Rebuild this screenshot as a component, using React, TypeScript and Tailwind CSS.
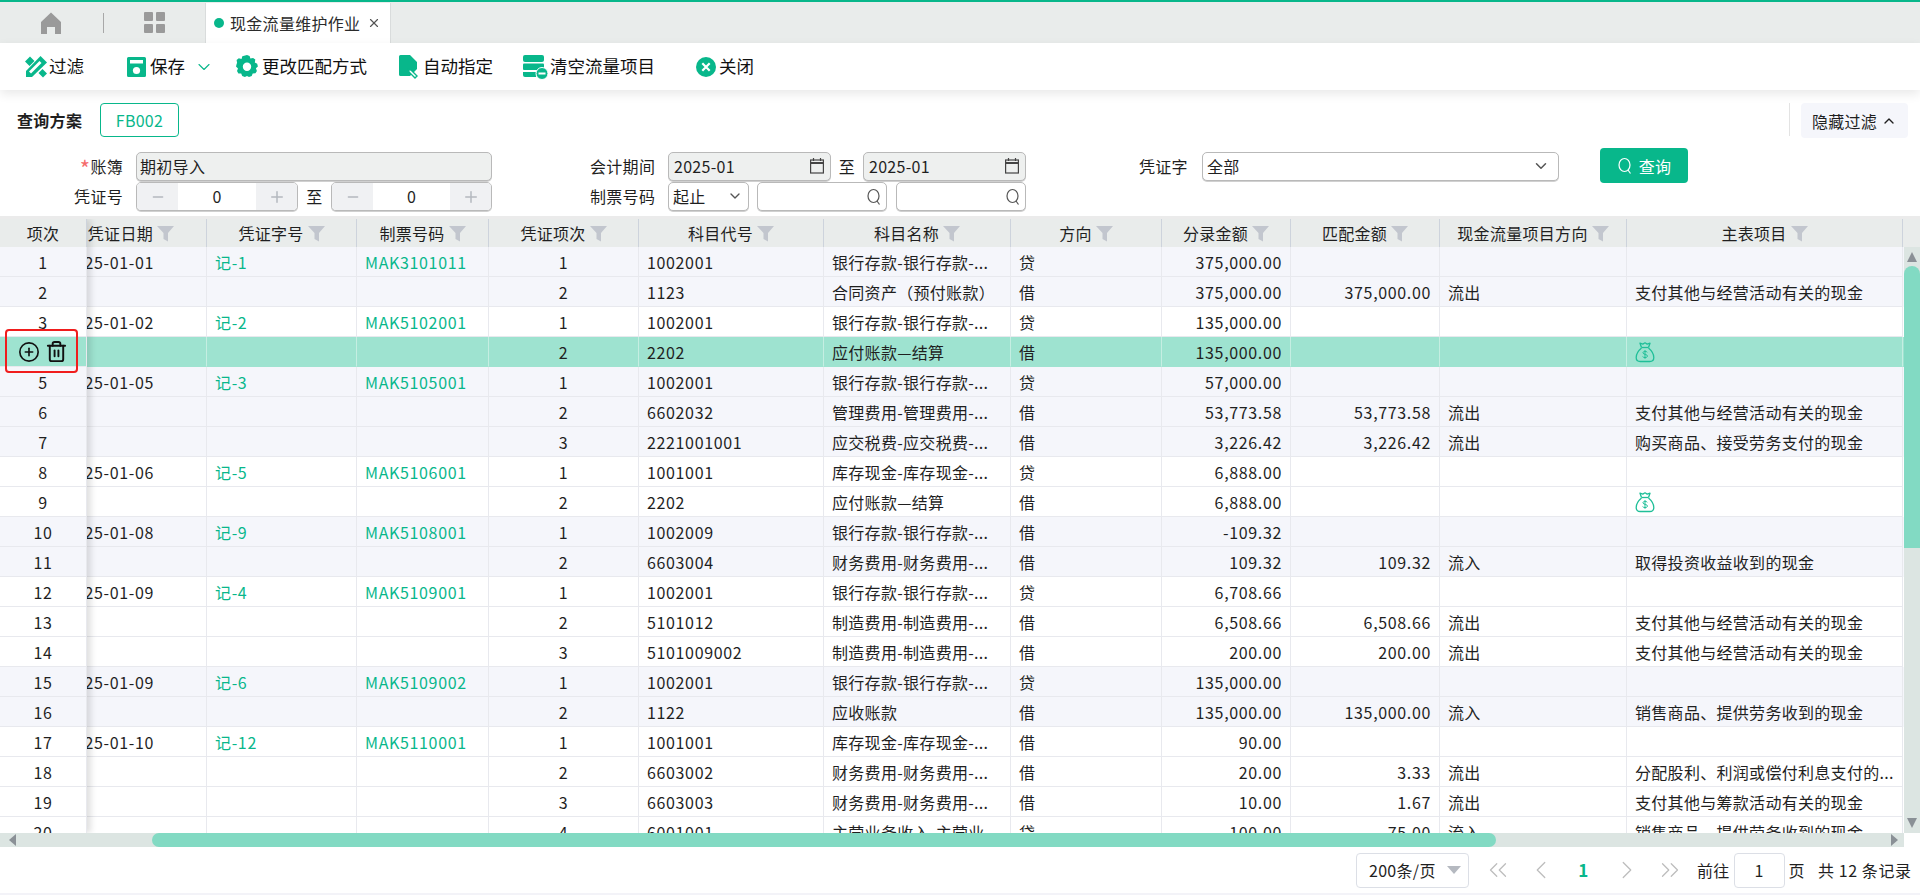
import React from "react";
import { ChevronDown, ChevronUp, ChevronLeft, ChevronRight, ChevronsLeft, ChevronsRight, Minus, Plus, X, CirclePlus, Trash2 } from "lucide-react";

const G = "#08b78b";
type Row = [string, string, string, string, string, string, string, string, string, string, string, string, number];
const YH = "银行存款-银行存款-...";
const ZF = "支付其他与经营活动有关的现金";
const XS = "销售商品、提供劳务收到的现金";
const rows: Row[] = [
  ["1", "2025-01-01", "记-1", "MAK3101011", "1", "1002001", YH, "贷", "375,000.00", "", "", "", 0],
  ["2", "", "", "", "2", "1123", "合同资产（预付账款）", "借", "375,000.00", "375,000.00", "流出", ZF, 0],
  ["3", "2025-01-02", "记-2", "MAK5102001", "1", "1002001", YH, "贷", "135,000.00", "", "", "", 1],
  ["4", "", "", "", "2", "2202", "应付账款—结算", "借", "135,000.00", "", "", "$", 2],
  ["5", "2025-01-05", "记-3", "MAK5105001", "1", "1002001", YH, "贷", "57,000.00", "", "", "", 0],
  ["6", "", "", "", "2", "6602032", "管理费用-管理费用-...", "借", "53,773.58", "53,773.58", "流出", ZF, 0],
  ["7", "", "", "", "3", "2221001001", "应交税费-应交税费-...", "借", "3,226.42", "3,226.42", "流出", "购买商品、接受劳务支付的现金", 0],
  ["8", "2025-01-06", "记-5", "MAK5106001", "1", "1001001", "库存现金-库存现金-...", "贷", "6,888.00", "", "", "", 1],
  ["9", "", "", "", "2", "2202", "应付账款—结算", "借", "6,888.00", "", "", "$", 1],
  ["10", "2025-01-08", "记-9", "MAK5108001", "1", "1002009", YH, "借", "-109.32", "", "", "", 0],
  ["11", "", "", "", "2", "6603004", "财务费用-财务费用-...", "借", "109.32", "109.32", "流入", "取得投资收益收到的现金", 0],
  ["12", "2025-01-09", "记-4", "MAK5109001", "1", "1002001", YH, "贷", "6,708.66", "", "", "", 1],
  ["13", "", "", "", "2", "5101012", "制造费用-制造费用-...", "借", "6,508.66", "6,508.66", "流出", ZF, 1],
  ["14", "", "", "", "3", "5101009002", "制造费用-制造费用-...", "借", "200.00", "200.00", "流出", ZF, 1],
  ["15", "2025-01-09", "记-6", "MAK5109002", "1", "1002001", YH, "贷", "135,000.00", "", "", "", 0],
  ["16", "", "", "", "2", "1122", "应收账款", "借", "135,000.00", "135,000.00", "流入", XS, 0],
  ["17", "2025-01-10", "记-12", "MAK5110001", "1", "1001001", "库存现金-库存现金-...", "借", "90.00", "", "", "", 1],
  ["18", "", "", "", "2", "6603002", "财务费用-财务费用-...", "借", "20.00", "3.33", "流出", "分配股利、利润或偿付利息支付的...", 1],
  ["19", "", "", "", "3", "6603003", "财务费用-财务费用-...", "借", "10.00", "1.67", "流出", "支付其他与筹款活动有关的现金", 1],
  ["20", "", "", "", "4", "6001001", "主营业务收入-主营业...", "贷", "100.00", "75.00", "流入", XS, 1],
];
const rowBg = (k: number) => (k === 2 ? "bg-[#9ee3d0]" : k === 1 ? "bg-white" : "bg-[#f5f6fb]");
const GRID = "grid grid-cols-[120px_150px_132px_150px_185px_187px_151px_129px_149px_187px_276px_1px]";

const Funnel = () => (
  <svg width="17" height="17" viewBox="0 0 17 17" className="ml-[4px] shrink-0"><path d="M0 1h17l-6 7v8.500L6.500 14V8z" fill="#c2c6ce" /></svg>
);
const Money = () => (
  <svg width="20" height="22" viewBox="0 0 20 22" fill="none" stroke="#1fbf98" strokeWidth="1.3" strokeLinejoin="round">
    <path d="M6.500 6.500 5 2.200l2.800.9L10 1.800l2.200 1.300 2.800-.9-1.500 4.300" />
    <path d="M6.500 6.500h7" />
    <path d="M6.500 7C3 10 1.200 13 1.200 16.500c0 2.600 1.600 4 4 4h9.600c2.400 0 4-1.400 4-4 0-3.500-1.800-6.500-5.300-9.500" />
    <path d="M12.300 11.300c-.6-.8-1.400-1-2.300-1-1.200 0-2 .6-2 1.500 0 2.100 4.400 1 4.400 3.200 0 1-.9 1.600-2.400 1.600-1 0-1.900-.4-2.400-1.100M10 9.200v8.600" strokeWidth="1" />
  </svg>
);
const Cal = () => (
  <svg width="16" height="18" viewBox="0 0 16 18" fill="none" stroke="#444" strokeWidth="1.200" className="shrink-0">
    <rect x="1.600" y="3" width="12.800" height="13" />
    <path d="M1.600 6h12.800" strokeWidth="2" />
    <path d="M4.500 1v3M11.500 1v3" />
  </svg>
);
const Lens = ({ c = "#555", s = 16 }: { c?: string; s?: number }) => (
  <svg width={s} height={s + 2} viewBox="0 0 16 18" fill="none" stroke={c} strokeWidth="1.200" className="shrink-0">
    <ellipse cx="7.500" cy="8" rx="5.500" ry="6.500" />
    <path d="M11 13l2.500 3.500" />
  </svg>
);

const HCell = ({ t, f = true, cls = "" }: { t: string; f?: boolean; cls?: string }) => (
  <div className={`h-[28px] flex items-center justify-center border-r border-[#cdd3dc] overflow-hidden ${cls}`}>
    <span className="whitespace-nowrap shrink-0">{t}</span>
    {f && <Funnel />}
  </div>
);

const Field = ({ w, gray, children, cls = "" }: { w: string; gray?: boolean; children?: React.ReactNode; cls?: string }) => (
  <div className={`${w} h-full flex items-center border border-[#b9b9b9] rounded-[5px] shadow-[0_1px_0_#d0d0d0] ${gray ? "bg-[#eef0ef]" : "bg-white"} ${cls}`}>{children}</div>
);
const Stepper = ({ w }: { w: string }) => (
  <Field w={w} cls="overflow-hidden">
    <div className="w-[41px] h-full bg-[#f0f1f3] flex items-center justify-center shrink-0"><Minus size={16} color="#b4b8bf" /></div>
    <div className="flex-1 text-center pb-[2px]">0</div>
    <div className="w-[41px] h-full bg-[#f0f1f3] flex items-center justify-center shrink-0"><Plus size={18} color="#b4b8bf" /></div>
  </Field>
);
const ToolBtn = ({ icon, t, cls, extra }: { icon: React.ReactNode; t: string; cls: string; extra?: React.ReactNode }) => (
  <div className={`flex items-center ${cls}`}>{icon}<span className="whitespace-nowrap">{t}</span>{extra}</div>
);
const PageCell = ({ children }: { children: React.ReactNode }) => (
  <div className="w-[43px] flex items-center justify-center">{children}</div>
);

export default function App() {
  return (
    <div className="w-[1920px] h-[895px] overflow-hidden bg-white text-[16px] tracking-[0.3px] text-[#1f1f1f] font-['Noto_Sans_CJK_SC','Noto_Sans',sans-serif] flex flex-col">
      {/* tab bar */}
      <div className="h-[43px] shrink-0 bg-[#e9eceb] border-t-[2px] border-[#08b78b] flex items-stretch">
        <div className="w-[104px] flex items-center pl-[40px]">
          <svg width="22" height="24" viewBox="0 0 22 24"><path d="M11 1.500 21 11v12h-6v-7H7v7H1V11z" fill="#9a9a9a" /></svg>
          <div className="w-px h-[20px] bg-[#a8a8a8] ml-[41px]" />
        </div>
        <div className="w-[101px] flex items-center justify-center">
          <div className="grid grid-cols-2 gap-[3px] w-[21px]">
            <div className="h-[9px] bg-[#9a9a9a] rounded-[1px]" /><div className="h-[9px] bg-[#9a9a9a] rounded-[1px]" />
            <div className="h-[9px] bg-[#9a9a9a] rounded-[1px]" /><div className="h-[9px] bg-[#9a9a9a] rounded-[1px]" />
          </div>
        </div>
        <div className="w-[186px] mt-[1px] bg-white border-x border-[#d9dcdc] flex items-center pl-[8px]">
          <div className="w-[10px] h-[10px] rounded-full bg-[#08b78b] mr-[6px] shrink-0" />
          <span className="whitespace-nowrap text-[#2b2b2b]">现金流量维护作业</span>
          <X size={14} className="ml-[7px] text-[#555]" />
        </div>
      </div>
      {/* toolbar */}
      <div className="h-[47px] shrink-0 flex items-center bg-white shadow-[0_4px_10px_rgba(0,0,0,0.09)] relative text-[17.5px] tracking-normal text-[#111]">
        <ToolBtn cls="ml-[25px] w-[101px]" t="过滤" icon={
          <svg width="22" height="22" viewBox="0 0 22 22" className="mr-[2px]" fill={G}>
            <path d="M15.500 0 22 6.500 7 21H1v-6z" />
            <path d="M0 5.500 5 .5l4.500 4.500-5 5zM13.500 17l4-4 4.500 4.500-4 4z" />
            <path d="M14.500 5l2 2L6 17.500 4 15.500z" fill="#fff" />
          </svg>} />
        <ToolBtn cls="w-[109px]" t="保存" extra={<ChevronDown size={20} strokeWidth={1.3} color="#08b78b" className="ml-[9px]" />} icon={
          <svg width="21" height="22" viewBox="0 0 21 22" className="mr-[3px]"><path d="M2.500 1h16A1.500 1.500 0 0 1 20 2.500V19.500A1.500 1.500 0 0 1 18.500 21h-16A1.500 1.500 0 0 1 1 19.500V2.500A1.500 1.500 0 0 1 2.500 1z" fill={G} /><rect x="4" y="4" width="13" height="3.500" fill="#fff" /><circle cx="10.500" cy="14.500" r="3.600" fill="#fff" /></svg>} />
        <ToolBtn cls="w-[163px]" t="更改匹配方式" icon={
          <svg width="24" height="24" viewBox="0 0 24 24" className="mr-[3px]"><path fillRule="evenodd" fill={G} d="M12 0l2.600 1 .8 2.600 2.700-.7 2.200 1.700-.5 2.800 2.400 1.300.7 2.800-2 1.800 1 2.600-1.400 2.400-2.800.1-1 2.600-2.700.9L12 21l-2.100 1-2.700-.9-1-2.600-2.800-.1-1.400-2.400 1-2.600-2-1.800.7-2.800L2.100 8 1.600 4.900 3.800 3.200l2.700.7.8-2.600zM12 7.500a4.200 4.200 0 1 0 0 8.400 4.200 4.200 0 0 0 0-8.400z" /></svg>} />
        <ToolBtn cls="w-[124px]" t="自动指定" icon={
          <svg width="23" height="26" viewBox="0 0 23 26" className="mr-[2px]"><path d="M2.500 1H12l7 7v7l-7 7H2.500A1.500 1.500 0 0 1 1 20.500V2.500A1.500 1.500 0 0 1 2.500 1z" fill={G} /><path d="M13 16l6 6-2 2-6-6-.5-2.500z" fill="#fff" stroke={G} strokeWidth="1.400" /></svg>} />
        <ToolBtn cls="w-[173px]" t="清空流量项目" icon={
          <svg width="27" height="26" viewBox="0 0 27 26" className="mr-[1px]"><rect x="1" y="1" width="21" height="7" rx="2" fill={G} /><rect x="1" y="9.500" width="21" height="6.500" rx="1" fill={G} /><path d="M1 18h13v5H3a2 2 0 0 1-2-2z" fill={G} /><circle cx="20" cy="19.500" r="6" fill={G} stroke="#fff" strokeWidth="1" /><rect x="16.500" y="18.500" width="7" height="2" fill="#fff" /></svg>} />
        <ToolBtn cls="" t="关闭" icon={
          <svg width="22" height="22" viewBox="0 0 22 22" className="mr-[2px]"><circle cx="11" cy="11" r="10" fill={G} /><path d="M7.300 7.300l7.400 7.400M14.700 7.300l-7.400 7.400" stroke="#fff" strokeWidth="2.200" /></svg>} />
      </div>
      {/* query scheme */}
      <div className="h-[62px] shrink-0 flex items-start pt-[13px] pr-[12px]">
        <span className="ml-[17px] w-[83px] h-[34px] flex items-center font-bold">查询方案</span>
        <div className="w-[79px] h-[34px] border border-[#08b78b] rounded-[4px] text-[#08b78b] flex items-center justify-center">FB002</div>
        <div className="ml-auto w-px h-[33px] bg-[#e3e3e3] mr-[11px]" />
        <div className="w-[107px] h-[35px] bg-[#f5f6fb] rounded-[4px] flex items-center justify-center whitespace-nowrap">隐藏过滤<ChevronUp size={16} className="ml-[4px]" /></div>
      </div>
      {/* form */}
      <div className="h-[64px] shrink-0 flex items-start">
        <div className="w-[492px] flex flex-col gap-[1px]">
          <div className="h-[29px] flex items-center">
            <span className="w-[123px] text-right mr-[13px] pb-[2px]"><span className="text-[#f56c6c] text-[22px] leading-[0] relative top-[4px]">*</span>账簿</span>
            <Field w="w-[356px]" gray cls="pb-[2px]"><span className="pl-[3px]">期初导入</span></Field>
          </div>
          <div className="h-[29px] flex items-center">
            <span className="w-[123px] text-right mr-[13px] pb-[2px]">凭证号</span>
            <Stepper w="w-[162px]" />
            <span className="w-[33px] text-center pb-[2px]">至</span>
            <Stepper w="w-[161px]" />
          </div>
        </div>
        <div className="ml-[98px] w-[436px] flex flex-col gap-[1px]">
          <div className="h-[29px] flex items-center">
            <span className="w-[78px] pb-[2px]">会计期间</span>
            <Field w="w-[163px]" gray cls="justify-between px-[5px] pb-[2px]"><span>2025-01</span><Cal /></Field>
            <span className="w-[32px] text-center pb-[2px]">至</span>
            <Field w="w-[163px]" gray cls="justify-between px-[5px] pb-[2px]"><span>2025-01</span><Cal /></Field>
          </div>
          <div className="h-[29px] flex items-center">
            <span className="w-[78px] pb-[2px]">制票号码</span>
            <Field w="w-[81px]" cls="justify-between pl-[4px] pr-[5px] pb-[2px]"><span>起止</span><ChevronDown size={16} color="#555" /></Field>
            <Field w="w-[130px]" cls="ml-[8px] justify-end pr-[4px]"><Lens /></Field>
            <Field w="w-[130px]" cls="ml-[9px] justify-end pr-[4px]"><Lens /></Field>
          </div>
        </div>
        <div className="ml-[113px] w-[420px] h-[29px] flex items-center">
          <span className="w-[63px] pb-[2px]">凭证字</span>
          <Field w="w-[357px]" cls="justify-between pl-[4px] pr-[8px] pb-[2px]"><span>全部</span><ChevronDown size={18} color="#555" /></Field>
        </div>
        <div className="ml-[41px] -mt-[4px] w-[88px] h-[35px] bg-[#08b78b] rounded-[4px] text-white flex items-center justify-center">
          <Lens c="#fff" /><span className="ml-[6px]">查询</span>
        </div>
      </div>
      {/* table */}
      <div className="h-[3px] shrink-0 bg-[#ebebeb]" />
      <div className="h-[614px] shrink-0 flex overflow-hidden relative">
        <div className="w-[87px] shrink-0 relative z-10 shadow-[4px_0_6px_rgba(0,0,0,0.12)] bg-white">
          <HCell t="项次" f={false} cls="bg-[#e9eceb]" />
          {rows.map((r) => (
            <div key={r[0]} className={`h-[30px] border-b border-r border-[#e8e9ee] flex items-center justify-center tracking-[0.65px] ${rowBg(r[12])}`}>
              {r[12] === 2 ? (
                <div className="flex items-center gap-[5px] text-[#111]"><CirclePlus size={22} strokeWidth={1.8} /><Trash2 size={23} strokeWidth={2} /></div>
              ) : r[0]}
            </div>
          ))}
        </div>
        <div className="w-[1833px] flex flex-col">
          <div className="flex bg-[#e9eceb] shrink-0 h-[28px]">
            <div className={GRID}>
              <HCell t="凭证日期" cls="!justify-end pr-[32px]" />
              <HCell t="凭证字号" /><HCell t="制票号码" /><HCell t="凭证项次" /><HCell t="科目代号" /><HCell t="科目名称" /><HCell t="方向" /><HCell t="分录金额" /><HCell t="匹配金额" /><HCell t="现金流量项目方向" /><HCell t="主表项目" />
            </div>
          </div>
          <div className="flex h-[586px]">
            <div className="w-[1817px] overflow-hidden">
              {rows.map((r) => (
                <div key={r[0]} className={`${GRID} h-[30px] ${rowBg(r[12])}`}>
                  {[r[1], r[2], r[3], r[4], r[5], r[6], r[7], r[8], r[9], r[10], r[11]].map((c, i) => (
                    <div key={i} className={`h-[30px] border-b border-r border-[#e8e9ee] flex items-center overflow-hidden whitespace-nowrap ${r[12] === 2 ? "border-r-[#c5eee2] border-b-[#9ee3d0]" : ""} ${i === 0 ? "justify-end pr-[52px]" : i === 3 ? "justify-center" : i === 7 || i === 8 ? "justify-end pr-[8px]" : "pl-[8px]"} ${i === 1 || i === 2 ? "text-[#08b78b]" : ""} ${[0, 1, 2, 3, 4, 7, 8].includes(i) ? "tracking-[0.65px]" : ""}`}>
                      {c === "$" ? <Money /> : <span className="shrink-0">{c}</span>}
                    </div>
                  ))}
                  <div />
                </div>
              ))}
            </div>
            <div className="w-[16px] bg-[#dce5e2] flex flex-col items-center shrink-0">
              <div className="w-0 h-0 border-x-[5px] border-x-transparent border-b-[10px] border-b-[#8a9096] mt-[5px]" />
              <div className="w-[16px] h-[282px] mt-[4px] bg-[#82dac3] rounded-t-[8px]" />
              <div className="w-0 h-0 border-x-[5px] border-x-transparent border-t-[10px] border-t-[#8a9096] mt-auto mb-[5px]" />
            </div>
          </div>
        </div>
        <div className="absolute left-[5px] top-[110px] w-[73px] h-[44px] border-[2.5px] border-[#f01d1d] rounded-[4px] z-20" />
      </div>
      {/* h scrollbar */}
      <div className="h-[14px] shrink-0 flex">
        <div className="w-[1904px] bg-[#dce5e2] flex items-center">
          <div className="w-0 h-0 border-y-[6px] border-y-transparent border-r-[7px] border-r-[#8a9096] ml-[9px]" />
          <div className="w-[1344px] h-[14px] ml-[136px] rounded-[7px] bg-[#82dac3]" />
          <div className="w-0 h-0 border-y-[6px] border-y-transparent border-l-[7px] border-l-[#8a9096] ml-auto mr-[6px]" />
        </div>
      </div>
      {/* pagination */}
      <div className="h-[46px] shrink-0 flex items-center">
        <div className="ml-[1356px] w-[113px] h-[35px] border border-[#dcdfe6] rounded-[4px] flex items-center pl-[12px] whitespace-nowrap">
          200条/页
          <div className="ml-[11px] w-0 h-0 border-x-[7px] border-x-transparent border-t-[8px] border-t-[#b5b9c0]" />
        </div>
        <div className="w-[7px]" />
        <PageCell><ChevronsLeft size={30} strokeWidth={1} color="#bdbdbd" /></PageCell>
        <PageCell><ChevronLeft size={30} strokeWidth={1} color="#bdbdbd" /></PageCell>
        <PageCell><span className="font-bold text-[17px] text-[#08b78b]">1</span></PageCell>
        <PageCell><ChevronRight size={30} strokeWidth={1} color="#bdbdbd" /></PageCell>
        <PageCell><ChevronsRight size={30} strokeWidth={1} color="#bdbdbd" /></PageCell>
        <span className="ml-[6px] whitespace-nowrap">前往</span>
        <div className="ml-[4px] w-[51px] h-[35px] border border-[#dcdfe6] rounded-[4px] flex items-center justify-center">1</div>
        <span className="ml-[4px]">页</span>
        <span className="ml-[13px] whitespace-nowrap tracking-[0.6px]">共 12 条记录</span>
      </div>
      <div className="flex-1 bg-[#f3f3f8]" />
    </div>
  );
}
